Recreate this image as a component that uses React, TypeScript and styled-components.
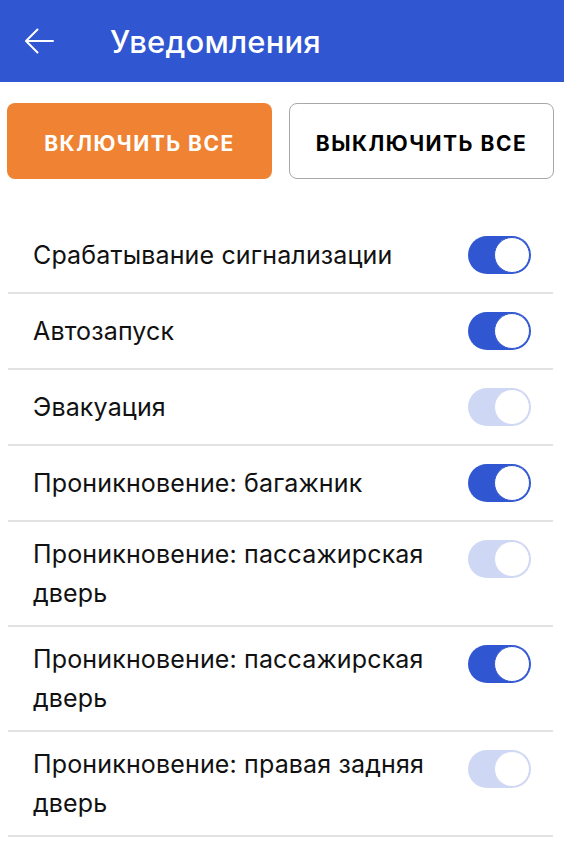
import styled, { createGlobalStyle, css } from 'styled-components';
import { FC, useState } from 'react';

const GlobalStyle = createGlobalStyle`
  * {
    box-sizing: border-box;
  }

  body {
    margin: 0;
    background: #ffffff;
    font-family: Inter, 'Noto Sans', sans-serif;
    color: #111111;
  }
`;

type Item = {
  id: number;
  label: string;
  on: boolean;
};

const ITEMS: Item[] = [
  { id: 1, label: 'Срабатывание сигнализации', on: true },
  { id: 2, label: 'Автозапуск', on: true },
  { id: 3, label: 'Эвакуация', on: false },
  { id: 4, label: 'Проникновение: багажник', on: true },
  { id: 5, label: 'Проникновение: пассажирская дверь', on: false },
  { id: 6, label: 'Проникновение: пассажирская дверь', on: true },
  { id: 7, label: 'Проникновение: правая задняя дверь', on: false }
];

const Page = styled.div`
  width: 564px;
  min-height: 860px;
  background: #ffffff;
`;

const Header = styled.header`
  height: 82px;
  background: #3056d1;
  display: flex;
  align-items: center;
  padding-left: 24px;
  gap: 56px;
  color: #ffffff;
`;

const BackButton = styled.button`
  background: transparent;
  border: none;
  padding: 0;
  display: flex;
  cursor: pointer;
  color: #ffffff;
`;

const Title = styled.h1`
  margin: 0;
  font-size: 31px;
  font-weight: 500;
  letter-spacing: 0.2px;
`;

const Actions = styled.div`
  display: grid;
  grid-template-columns: 265px 265px;
  gap: 17px;
  padding: 21px 0 0 7px;
`;

const ActionButton = styled.button<{ $primary?: boolean }>`
  height: 76px;
  padding: 5px 0 0;
  border-radius: 8px;
  font-family: Inter, 'Noto Sans', sans-serif;
  font-size: 21px;
  font-weight: 700;
  letter-spacing: 1.5px;
  cursor: pointer;
  ${({ $primary }) =>
    $primary
      ? css`
          background: #ef8333;
          border: none;
          color: #ffffff;
        `
      : css`
          background: #ffffff;
          border: 1.5px solid #a8a8a8;
          color: #000000;
        `};
`;

const List = styled.ul`
  list-style: none;
  margin: 39px 11px 0 8px;
  padding: 0;
`;

const Row = styled.li`
  display: flex;
  align-items: center;
  justify-content: space-between;
  gap: 20px;
  padding: 13px 22px 13px 25px;
  border-bottom: 2px solid #e2e2e2;
`;

const Label = styled.span`
  flex: 1;
  font-size: 25px;
  line-height: 38.5px;
  letter-spacing: 0.15px;
`;

const ToggleBox = styled.div`
  align-self: flex-start;
  height: 48px;
  display: flex;
  align-items: center;
  flex-shrink: 0;
`;

const Track = styled.button<{ $on: boolean }>`
  position: relative;
  width: 63px;
  height: 38px;
  border-radius: 19px;
  border: none;
  padding: 0;
  background: #3056d1;
  cursor: pointer;
  opacity: ${({ $on }) => ($on ? 1 : 0.23)};
`;

const Knob = styled.span`
  position: absolute;
  top: 1px;
  right: 1px;
  width: 36px;
  height: 36px;
  border-radius: 50%;
  background: #ffffff;
  border: 1.5px solid #3056d1;
`;

const ArrowIcon: FC = () => (
  <svg width="30" height="26" viewBox="0 0 30 26" fill="none">
    <path
      d="M29 13H2M13.5 1.5 2 13l11.5 11.5"
      stroke="currentColor"
      strokeWidth="2"
      strokeLinecap="round"
      strokeLinejoin="round"
    />
  </svg>
);

const Toggle: FC<{ on: boolean; onClick: () => void }> = ({ on, onClick }) => (
  <ToggleBox>
    <Track $on={on} onClick={onClick} aria-pressed={on}>
      <Knob />
    </Track>
  </ToggleBox>
);

const App: FC = () => {
  const [items, setItems] = useState(ITEMS);

  const setAll = (on: boolean) => setItems(items.map((item) => ({ ...item, on })));
  const flip = (id: number) =>
    setItems(items.map((item) => (item.id === id ? { ...item, on: !item.on } : item)));

  return (
    <Page>
      <GlobalStyle />
      <Header>
        <BackButton title='Назад'>
          <ArrowIcon />
        </BackButton>
        <Title>Уведомления</Title>
      </Header>
      <Actions>
        <ActionButton $primary onClick={() => setAll(true)}>
          ВКЛЮЧИТЬ ВСЕ
        </ActionButton>
        <ActionButton onClick={() => setAll(false)}>ВЫКЛЮЧИТЬ ВСЕ</ActionButton>
      </Actions>
      <List>
        {items.map((item) => (
          <Row key={item.id}>
            <Label>{item.label}</Label>
            <Toggle on={item.on} onClick={() => flip(item.id)} />
          </Row>
        ))}
      </List>
    </Page>
  );
};

export default App;
